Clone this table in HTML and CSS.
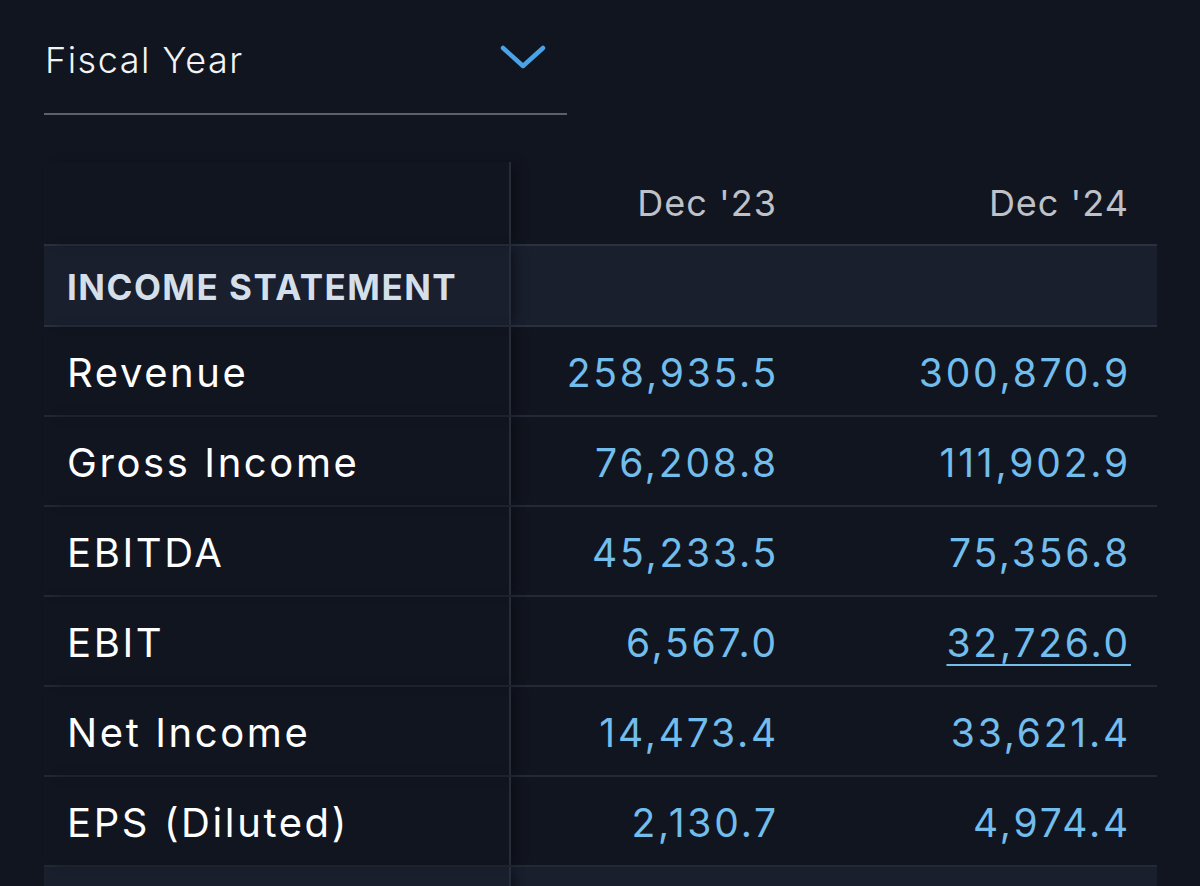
FILE: index.html
```html
<!DOCTYPE html>
<html>
<head>
<meta charset="utf-8">
<link rel="stylesheet" href="styles.css">
</head>
<body>
<div class="page">
  <div class="select">
    <span class="select-label">Fiscal Year</span>
    <svg class="chev" width="46" height="26" viewBox="0 0 46 26"><path d="M3 4 L23 22 L43 4" fill="none" stroke="#4aa3e6" stroke-width="4.5" stroke-linecap="round" stroke-linejoin="round"/></svg>
  </div>
  <div class="table">
    <div class="row head">
      <div class="cell label"></div>
      <div class="cell num">Dec '23</div>
      <div class="cell num last">Dec '24</div>
    </div>
    <div class="row section">
      <div class="cell label">INCOME STATEMENT</div>
      <div class="cell num"></div>
      <div class="cell num last"></div>
    </div>
    <div class="row">
      <div class="cell label">Revenue</div>
      <div class="cell num val">258,935.5</div>
      <div class="cell num val last">300,870.9</div>
    </div>
    <div class="row">
      <div class="cell label">Gross Income</div>
      <div class="cell num val">76,208.8</div>
      <div class="cell num val last">111,902.9</div>
    </div>
    <div class="row">
      <div class="cell label">EBITDA</div>
      <div class="cell num val">45,233.5</div>
      <div class="cell num val last">75,356.8</div>
    </div>
    <div class="row">
      <div class="cell label">EBIT</div>
      <div class="cell num val">6,567.0</div>
      <div class="cell num val last"><span class="link">32,726.0</span></div>
    </div>
    <div class="row">
      <div class="cell label">Net Income</div>
      <div class="cell num val">14,473.4</div>
      <div class="cell num val last">33,621.4</div>
    </div>
    <div class="row">
      <div class="cell label">EPS (Diluted)</div>
      <div class="cell num val">2,130.7</div>
      <div class="cell num val last">4,974.4</div>
    </div>
    <div class="row section tail">
      <div class="cell label"></div>
      <div class="cell num"></div>
      <div class="cell num last"></div>
    </div>
  </div>
</div>
</body>
</html>
```
FILE: styles.css
```css
html, body {
  margin: 0;
  padding: 0;
  background: #11151f;
  height: 886px;
  overflow: hidden;
}
body {
  font-family: Inter, "Open Sans", sans-serif;
  color: #ffffff;
}
.page {
  padding: 0 43px 0 44px;
}
.select {
  width: 523px;
  height: 115px;
  border-bottom: 2px solid #5b606b;
  display: flex;
  align-items: center;
  justify-content: space-between;
  box-sizing: border-box;
  padding: 0 21px 0 1px;
}
.select-label {
  font-size: 36px;
  font-weight: 300;
  letter-spacing: 1.5px;
  color: #f2f3f5;
  margin-top: 6px;
}
.table {
  margin-top: 47px;
  width: 1113px;
}
.row {
  display: grid;
  grid-template-columns: 467px 293px 353px;
  height: 88px;
  border-bottom: 2px solid #242936;
}
.row.head {
  height: 82px;
  border-bottom: none;
}
.row.section {
  background: #1a1f2e;
  border-top: 2px solid #2c3140;
  border-bottom: 2px solid #2c3140;
  height: 79px;
}
.row.section.tail {
  border-top: none;
  border-bottom: none;
  height: 40px;
}
.cell {
  display: flex;
  align-items: center;
  box-sizing: border-box;
}
.cell.label {
  padding-left: 23px;
  border-right: 2px solid #272c38;
  font-size: 40px;
  letter-spacing: 2.6px;
  color: #ffffff;
  position: relative;
  box-shadow: 8px 0 10px -4px rgba(5, 7, 12, 0.55);
  z-index: 1;
}
.section .cell.label {
  font-size: 35px;
  font-weight: 700;
  letter-spacing: 1.5px;
  color: #d5dfea;
  padding-top: 6px;
}
.cell.num {
  justify-content: flex-end;
  padding-right: 25px;
  font-size: 39px;
  letter-spacing: 2.8px;
}
.cell.num.last {
  padding-right: 26px;
}
.head .cell.num {
  color: #bfc1c8;
  font-size: 36px;
  letter-spacing: 1px;
  padding-right: 27px;
  padding-top: 0;
}
.head .cell.num.last {
  padding-right: 28px;
}
.cell.val {
  color: #72bdec;
  padding-top: 3px;
}
.row .cell.label {
  padding-top: 3px;
}
.link {
  text-decoration: underline;
  text-decoration-thickness: 2px;
  text-underline-offset: 7px;
}
```
